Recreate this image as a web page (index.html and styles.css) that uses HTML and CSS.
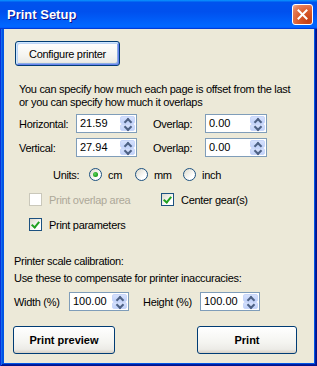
FILE: index.html
```html
<!DOCTYPE html>
<html lang="en">

<head>
    <meta charset="UTF-8" />
    <title>Print Setup</title>
    <link rel="stylesheet" href="styles.css">
</head>

<body>
    <div class="window">
        <div class="titlebar">
            <span class="title">Print Setup</span>
            <button class="close" aria-label="Close">
                <svg width="11" height="11" viewBox="0 0 11 11">
                    <path d="M1.5 1.5 L9.5 9.5 M9.5 1.5 L1.5 9.5" stroke="#fff" stroke-width="2" stroke-linecap="square" />
                </svg>
            </button>
        </div>

        <div class="client">
            <div class="config-row">
                <button class="btn btn-config">Configure printer</button>
            </div>

            <p class="note">You can specify how much each page is offset from the last<br>or you can specify how much it overlaps</p>

            <div class="offset-grid">
                <label>Horizontal:</label>
                <div class="spin">
                    <span class="val">21.59</span>
                    <span class="arrows"><span class="arr up"></span><span class="arr down"></span></span>
                </div>
                <label class="lbl-overlap">Overlap:</label>
                <div class="spin">
                    <span class="val">0.00</span>
                    <span class="arrows"><span class="arr up"></span><span class="arr down"></span></span>
                </div>

                <label>Vertical:</label>
                <div class="spin">
                    <span class="val">27.94</span>
                    <span class="arrows"><span class="arr up"></span><span class="arr down"></span></span>
                </div>
                <label class="lbl-overlap">Overlap:</label>
                <div class="spin">
                    <span class="val">0.00</span>
                    <span class="arrows"><span class="arr up"></span><span class="arr down"></span></span>
                </div>
            </div>

            <div class="units">
                <span class="units-label">Units:</span>
                <span class="radio-item"><span class="radio checked"></span>cm</span>
                <span class="radio-item mm"><span class="radio"></span>mm</span>
                <span class="radio-item"><span class="radio"></span>inch</span>
            </div>

            <div class="checks">
                <span class="check-item disabled wide"><span class="check"></span>Print overlap area</span>
                <span class="check-item"><span class="check on"></span>Center gear(s)</span>
            </div>
            <div class="checks">
                <span class="check-item"><span class="check on"></span>Print parameters</span>
            </div>

            <div class="calib">
                <p>Printer scale calibration:</p>
                <p>Use these to compensate for printer inaccuracies:</p>
            </div>

            <div class="scale-grid">
                <label>Width (%)</label>
                <div class="spin">
                    <span class="val">100.00</span>
                    <span class="arrows"><span class="arr up"></span><span class="arr down"></span></span>
                </div>
                <label class="lbl-height">Height (%)</label>
                <div class="spin">
                    <span class="val">100.00</span>
                    <span class="arrows"><span class="arr up"></span><span class="arr down"></span></span>
                </div>
            </div>

            <div class="actions">
                <button class="btn btn-big">Print preview</button>
                <button class="btn btn-big">Print</button>
            </div>
        </div>
    </div>
</body>

</html>
```

FILE: styles.css
```css
* {
    margin: 0;
    padding: 0;
    box-sizing: border-box;
}

body {
    font-family: 'Liberation Sans', Arial, sans-serif;
    font-size: 11px;
    letter-spacing: -0.3px;
    color: #000;
    background: #ece9d8;
}

.window {
    width: 317px;
    height: 366px;
    display: flex;
    flex-direction: column;
    background: #0055e5;
    box-shadow: inset 1px 0 #0831d9, inset -1px 0 #00138c, inset 0 -1px #00138c,
        inset 2px 0 #166aee, inset -2px 0 #001ea0, inset 0 -2px #001ea0;
}

/* title bar */
.titlebar {
    height: 29px;
    display: flex;
    align-items: center;
    justify-content: space-between;
    padding: 0 4px 1px 7px;
    background: linear-gradient(180deg, #0997ff, #0053ee 8%, #0050ee 40%, #0066ff 88%, #0066ff 93%, #005bff 95%, #003dd7 96%, #003dd7);
}

.title {
    font-weight: bold;
    font-size: 13px;
    letter-spacing: 0;
    color: #fff;
    text-shadow: 1px 1px #0f1089;
}

.close {
    width: 21px;
    height: 21px;
    border: 1px solid #fff;
    border-radius: 3px;
    background: radial-gradient(circle at 80% 85%, #c44015 0%, #d95a2b 45%, #e5805c 80%, #f2b49a 100%);
    display: flex;
    align-items: center;
    justify-content: center;
}

/* client area */
.client {
    flex: 1;
    margin: 0 3px 3px 4px;
    background: #ece9d8;
    display: flex;
    flex-direction: column;
}

.btn {
    font-family: inherit;
    font-size: 11px;
    letter-spacing: -0.3px;
    color: #000;
    border: 1px solid #003c74;
    border-radius: 3px;
    background: linear-gradient(180deg, #ffffff, #f4f4f0 60%, #ecebe6 86%, #d6d0c5);
}

.config-row {
    margin-top: 12px;
    padding-left: 11px;
}

.btn-config {
    width: 105px;
    height: 25px;
    box-shadow: inset 1px 1px #cee7ff, inset -1px -1px #6982ee, inset 2px 2px #bcd4f6, inset -2px -2px #89ade4;
}

.note {
    margin-top: 17px;
    padding-left: 15px;
    line-height: 13px;
}

/* offset inputs */
.offset-grid {
    margin-top: 5px;
    padding-left: 15px;
    display: grid;
    grid-template-columns: 57px 61px 68px 62px;
    row-gap: 5px;
    align-items: center;
}

.lbl-overlap {
    margin-left: 16px;
}

.spin {
    height: 19px;
    border: 1px solid #7f9db9;
    background: #fff;
    display: flex;
    padding: 1px;
}

.spin .val {
    flex: 1;
    padding-left: 2px;
    line-height: 15px;
    letter-spacing: 0;
}

.arrows {
    width: 15px;
    display: flex;
    flex-direction: column;
}

.arr {
    flex: 1;
    position: relative;
    border-radius: 2px;
    background: linear-gradient(180deg, #d6e1fc, #c0d1f9);
    border: 1px solid #c8d6fa;
}

.arr::after {
    content: "";
    position: absolute;
    left: 4px;
    width: 4px;
    height: 4px;
    border-left: 2px solid #4d6185;
    border-top: 2px solid #4d6185;
}

.arr.up::after {
    top: 2px;
    transform: rotate(45deg);
}

.arr.down::after {
    top: -1px;
    transform: rotate(225deg);
}

/* units */
.units {
    margin-top: 11px;
    height: 13px;
    display: flex;
    align-items: center;
    padding-left: 49px;
}

.units-label {
    width: 36px;
}

.radio-item {
    width: 46px;
    display: flex;
    align-items: center;
    gap: 6px;
}

.radio-item.mm {
    width: 48px;
}

.radio {
    width: 13px;
    height: 13px;
    border-radius: 50%;
    border: 1px solid #1c5180;
    background: linear-gradient(135deg, #dcd9cb, #ffffff 70%);
    position: relative;
}

.radio.checked::after {
    content: "";
    position: absolute;
    left: 3px;
    top: 3px;
    width: 5px;
    height: 5px;
    border-radius: 50%;
    background: radial-gradient(circle at 40% 40%, #5ed45e, #21a121 60%, #1a8a1a);
}

/* checkboxes */
.checks {
    margin-top: 12px;
    height: 13px;
    display: flex;
    align-items: center;
    padding-left: 25px;
}

.check-item {
    display: flex;
    align-items: center;
    gap: 7px;
}

.check-item.wide {
    width: 132px;
}

.check-item.disabled {
    color: #aca899;
}

.check {
    width: 13px;
    height: 13px;
    border: 1px solid #1c5180;
    background: linear-gradient(135deg, #dcd9cb, #ffffff 70%);
    position: relative;
}

.disabled .check {
    border-color: #cac8bb;
    background: #fff;
}

.check.on::after {
    content: "";
    position: absolute;
    left: 3px;
    top: 1px;
    width: 3px;
    height: 6px;
    border-right: 2px solid #21a121;
    border-bottom: 2px solid #21a121;
    transform: rotate(40deg);
}

/* calibration */
.calib {
    margin-top: 24px;
    padding-left: 10px;
    line-height: 13px;
}

.calib p + p {
    margin-top: 4px;
}

.scale-grid {
    margin-top: 7px;
    padding-left: 10px;
    display: grid;
    grid-template-columns: 55px 60px 71px 60px;
    align-items: center;
}

.lbl-height {
    margin-left: 14px;
}

/* bottom buttons */
.actions {
    margin-top: 15px;
    display: flex;
    justify-content: space-between;
    padding: 0 17px 0 9px;
}

.btn-big {
    height: 28px;
    width: 102px;
    font-weight: bold;
    letter-spacing: 0;
}

.btn-big + .btn-big {
    width: 100px;
}
```
